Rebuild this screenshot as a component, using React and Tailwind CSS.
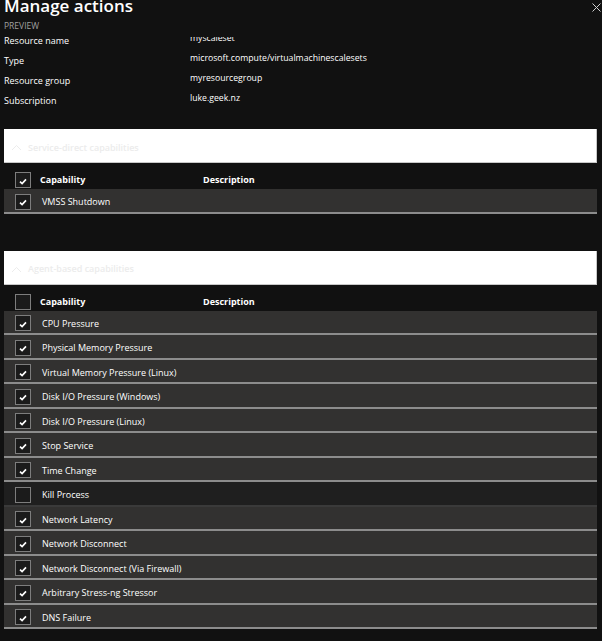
import React from "react";

const Check = ({ checked }) => (
  <div className="w-[16px] h-[16px] border border-[#7d7d7d] bg-[#1b1b1b] flex items-center justify-center shrink-0">
    {checked && (
      <svg width="8" height="7" viewBox="0 0 8 7" className="mt-[2px]">
        <path d="M1 3.6 L3.1 5.6 L7 1.4" stroke="#ffffff" strokeWidth="1.7" fill="none" />
      </svg>
    )}
  </div>
);

const Row = ({ label, checked }) => (
  <div
    className={`h-[24.5px] flex items-center pl-[11px] pt-[3px] border-b-2 ${
      checked ? "bg-[#323130] border-[#8c8c8c]" : "bg-[#1f1f1f] border-[#3a3a3a]"
    }`}
  >
    <Check checked={checked} />
    <span className="ml-[11px] text-[9px] text-white leading-none">{label}</span>
  </div>
);

const SectionHeader = ({ title }) => (
  <div className="h-[34px] bg-white border-b border-r border-[#c8c8c8] flex items-center pl-[7px] pt-[4px]">
    <svg width="11" height="7" viewBox="0 0 11 7" className="mr-[6px]">
      <path d="M1 6 L5.5 1.5 L10 6" stroke="#ececec" strokeWidth="1" fill="none" />
    </svg>
    <span className="text-[9px] font-semibold text-[#ececec]">{title}</span>
  </div>
);

const HeaderRow = ({ checked }) => (
  <div className="h-[26px] pt-[8px] flex items-center pl-[11px]">
    <Check checked={checked} />
    <span className="ml-[9px] w-[163px] text-[9px] font-bold text-white">Capability</span>
    <span className="text-[9px] font-bold text-white">Description</span>
  </div>
);

const info = [
  ["Resource name", "myscaleset"],
  ["Type", "microsoft.compute/virtualmachinescalesets"],
  ["Resource group", "myresourcegroup"],
  ["Subscription", "luke.geek.nz"],
];

const agent = [
  ["CPU Pressure", true],
  ["Physical Memory Pressure", true],
  ["Virtual Memory Pressure (Linux)", true],
  ["Disk I/O Pressure (Windows)", true],
  ["Disk I/O Pressure (Linux)", true],
  ["Stop Service", true],
  ["Time Change", true],
  ["Kill Process", false],
  ["Network Latency", true],
  ["Network Disconnect", true],
  ["Network Disconnect (Via Firewall)", true],
  ["Arbitrary Stress-ng Stressor", true],
  ["DNS Failure", true],
];

export default function App() {
  return (
    <div className="w-[602px] h-[641px] bg-[#111111] overflow-hidden font-['Open_Sans',sans-serif] text-white">
      <div className="h-[20px] flex justify-between pl-[4px] pr-[1px]">
        <div className="text-[17px] font-semibold leading-[20px] -mt-[4px]">Manage actions</div>
        <svg width="9" height="9" viewBox="0 0 9 9" className="mt-[3px]">
          <path d="M0.5 0.5 L8.5 8.5 M8.5 0.5 L0.5 8.5" stroke="#d0d0d0" strokeWidth="1" />
        </svg>
      </div>
      <div className="h-[11px] pl-[4px] text-[8.5px] leading-[11px] text-[#a0a0a0]">PREVIEW</div>
      <div className="px-[4px]">
        {info.map(([k, v], i) => (
          <div key={k} className="h-[20px] grid grid-cols-[186px_1fr]">
            <div className="text-[9px] leading-[20px] text-white">{k}</div>
            {i === 0 ? (
              <div className="mt-[6px] h-[14px] overflow-hidden">
                <div className="text-[8.7px] leading-[20px] -mt-[9px]">{v}</div>
              </div>
            ) : (
              <div className="text-[8.7px] leading-[20px] -mt-[3px]">{v}</div>
            )}
          </div>
        ))}
      </div>
      <div className="pl-[4px] pr-[5px] mt-[18px]">
        <SectionHeader title="Service-direct capabilities" />
        <HeaderRow checked />
        <Row label="VMSS Shutdown" checked />
        <div className="mt-[37px]">
          <SectionHeader title="Agent-based capabilities" />
        </div>
        <HeaderRow checked={false} />
        {agent.map(([l, c]) => (
          <Row key={l} label={l} checked={c} />
        ))}
      </div>
    </div>
  );
}
